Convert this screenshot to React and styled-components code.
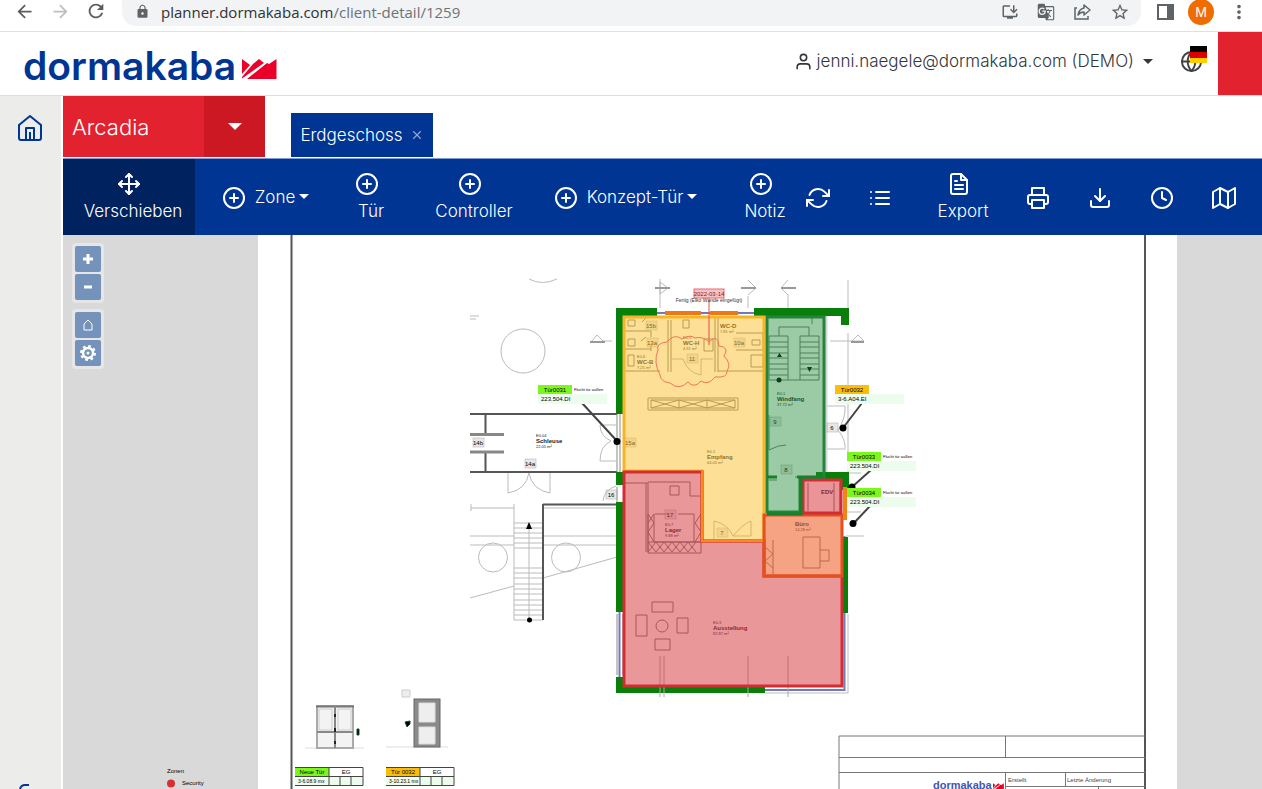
import React from 'react';
import styled, { createGlobalStyle } from 'styled-components';
import {
  FiMove, FiPlusCircle, FiRefreshCw, FiList, FiFileText, FiPrinter,
  FiDownload, FiClock, FiMap, FiUser, FiGlobe, FiX,
} from 'react-icons/fi';
import {
  MdArrowBack, MdArrowForward, MdRefresh, MdLock, MdInstallDesktop,
  MdGTranslate, MdStarBorder, MdMoreVert,
} from 'react-icons/md';

const BLUE = '#003594';
const RED = '#e3222f';

const GlobalStyle = createGlobalStyle`
  * {
    box-sizing: border-box;
  }

  body {
    margin: 0;
    background: #fff;
    font-family: Inter, "Liberation Sans", sans-serif;
  }

  a {
    color: inherit;
  }

  button {
    border: 0;
    padding: 0;
    background: none;
    color: inherit;
    font: inherit;
    cursor: pointer;
  }

  svg {
    display: block;
    flex: none;
  }
`;

const Page = styled.div`
  display: flex;
  flex-direction: column;
  height: 100vh;
  overflow: hidden;
`;

/* browser bar */

const BrowserBar = styled.div`
  display: flex;
  align-items: flex-start;
  height: 32px;
  flex: none;
  padding: 0 12px;
  border-bottom: 1px solid #dfe0e2;
  color: #5f6368;
`;

const NavButton = styled.button`
  width: 24px;
  height: 22px;
  margin-right: 12px;
  color: ${({ $dim }) => ($dim ? '#bcbec1' : '#5a5c60')};
  display: flex;
  align-items: center;
  justify-content: center;
`;

const AddressBar = styled.div`
  display: flex;
  align-items: center;
  flex: 1;
  height: 26px;
  margin-left: 2px;
  padding: 0 11px 3px 13px;
  border-radius: 0 0 14px 14px;
  background: #f1f3f4;
`;

const Address = styled.div`
  flex: 1;
  margin-left: 11px;
  font: 15px/22px "Open Sans", sans-serif;
  color: #6f7276;
  white-space: nowrap;

  strong {
    font-weight: 400;
    color: #303236;
  }
`;

const BarActions = styled.div`
  display: flex;
  align-items: center;
  gap: 18px;
  height: 24px;

  button {
    display: flex;
  }
`;

const WindowActions = styled(BarActions)`
  margin-left: 16px;
  gap: 14px;
`;

const Avatar = styled.button`
  align-items: center;
  justify-content: center;
  width: 26px;
  height: 26px;
  border-radius: 50%;
  background: #ee6c00;
  color: #fff;
  font-size: 13px;
`;

/* header */

const Header = styled.header`
  display: flex;
  align-items: stretch;
  height: 64px;
  flex: none;
  border-bottom: 1px solid #dcdddf;
`;

const Logo = styled.a`
  display: flex;
  align-items: center;
  gap: 6px;
  padding: 4px 0 0 23px;
  margin-right: auto;
  color: ${BLUE};
  font-size: 39px;
  line-height: 56px;
  font-weight: 600;
  text-decoration: none;

  svg {
    margin-top: 6px;
  }
`;

const UserMenu = styled.button`
  display: flex;
  align-items: center;
  gap: 4px;
  padding-bottom: 5px;
  color: #33363b;
  font-size: 17px;
  font-weight: 300;
`;

const Caret = styled.span`
  border: 5px solid transparent;
  border-bottom: 0;
  border-top-color: currentColor;
  margin-left: ${({ $gap }) => $gap || 0}px;
`;

const Language = styled.button`
  position: relative;
  display: flex;
  align-items: center;
  width: 28px;
  margin: 0 10px 4px 27px;
  color: #3e4146;
`;

const Flag = styled.span`
  position: absolute;
  top: 14px;
  right: 1px;
  width: 17px;
  height: 17px;
  background: linear-gradient(#000 0 6px, #d00 6px 12px, #ffce00 12px);
`;

const RedBlock = styled.div`
  width: 44px;
  background: ${RED};
`;

/* body */

const Body = styled.div`
  display: flex;
  flex: 1;
  min-height: 0;
`;

const Sidebar = styled.nav`
  display: flex;
  flex-direction: column;
  justify-content: space-between;
  align-items: center;
  width: 63px;
  flex: none;
  padding: 18px 2px 0 0;
  border-right: 2px solid #fff;
  background: #ecedeb;
  color: ${BLUE};
  overflow: hidden;
`;

const Main = styled.main`
  display: flex;
  flex-direction: column;
  flex: 1;
  min-width: 0;
`;

const Tabs = styled.div`
  display: flex;
  align-items: flex-end;
  height: 62px;
  flex: none;
  color: #fff;
`;

const Client = styled.div`
  display: flex;
  width: 202px;
  height: 61px;
  margin-bottom: 1px;
  margin-right: 26px;
  background: ${RED};
`;

const ClientName = styled.button`
  flex: 1;
  padding-left: 9px;
  text-align: left;
  font-size: 22px;
  font-weight: 300;
`;

const ClientToggle = styled.button`
  display: flex;
  align-items: center;
  justify-content: center;
  width: 61px;
  background: #cb1822;

  span {
    border-width: 7px 7px 0;
  }
`;

const Tab = styled.div`
  display: flex;
  align-items: center;
  justify-content: center;
  gap: 7px;
  width: 142px;
  height: 44px;
  margin-bottom: 1px;
  background: ${BLUE};
  font-size: 17px;
  font-weight: 300;

  button + button {
    color: #8da5d2;
  }
`;

const Toolbar = styled.div`
  display: flex;
  height: 77px;
  flex: none;
  padding-right: 7px;
  border-top: 1px solid #7d9bcd;
  background: ${BLUE};
  color: #fff;
`;

const Tool = styled.button`
  display: flex;
  align-items: center;
  justify-content: center;
  flex: none;
  gap: 9px;
  width: ${({ $width }) => $width || 62}px;
  margin-left: ${({ $push }) => ($push ? 'auto' : 0)};
  padding-top: 1px;
  background: ${({ $active }) => ($active ? '#00225f' : 'none')};
  font-size: 17px;
  line-height: 24px;
  font-weight: 300;
  white-space: nowrap;
`;

const StackedTool = styled(Tool)`
  flex-direction: column;
  gap: 3px;
  padding-top: 0;

  span {
    padding-left: 8px;
  }
`;

const MenuLabel = styled.span`
  display: flex;
  align-items: center;
  padding-bottom: 2px;
`;

/* map */

const Canvas = styled.section`
  position: relative;
  flex: 1;
  min-height: 0;
  background: #d9d9d9;
  overflow: hidden;
`;

const MapControls = styled.div`
  position: absolute;
  top: 8px;
  left: 9px;
  display: flex;
  flex-direction: column;
  gap: 6px;
`;

const ControlGroup = styled.div`
  display: flex;
  flex-direction: column;
  gap: 2px;
  padding: 3px;
  border-radius: 4px;
  background: #e6e6e8;
`;

const ControlButton = styled.button`
  display: flex;
  align-items: center;
  justify-content: center;
  width: 26px;
  height: 26px;
  border-radius: 2px;
  background: #7593ba;
  color: #fff;
`;

const PlanSvg = styled.svg`
  position: absolute;
  inset: 0;
  width: 100%;
  height: 100%;
  font-family: "Liberation Sans", sans-serif;
`;

const tools = [
  { label: 'Verschieben', icon: FiMove, width: 132, active: true },
  { label: 'Zone', icon: FiPlusCircle, width: 141, menu: true },
  { label: 'Tür', icon: FiPlusCircle },
  { label: 'Controller', icon: FiPlusCircle, width: 144 },
  { label: 'Konzept-Tür', icon: FiPlusCircle, width: 167, menu: true },
  { label: 'Notiz', icon: FiPlusCircle, width: 52, push: true },
  { title: 'Aktualisieren', icon: FiRefreshCw },
  { title: 'Liste', icon: FiList },
  { label: 'Export', icon: FiFileText, width: 96 },
  { title: 'Drucken', icon: FiPrinter },
  { title: 'Herunterladen', icon: FiDownload },
  { title: 'Verlauf', icon: FiClock },
  { title: 'Karte', icon: FiMap },
];

const ToolItem = ({ label, title, icon: Icon, width, menu, active, push }) => {
  if (!label) {
    return <Tool $width={width} aria-label={title}><Icon size={24} /></Tool>;
  }
  if (menu) {
    return (
      <Tool $width={width}>
        <Icon size={24} />
        <MenuLabel>{label}<Caret $gap={4} /></MenuLabel>
      </Tool>
    );
  }
  return (
    <StackedTool $width={width} $active={active} $push={push}>
      <Icon size={24} />
      <span>{label}</span>
    </StackedTool>
  );
};

const Crown = ({ width = 35, ...rest }) => (
  <svg viewBox="0 0 35 20" width={width} {...rest}>
    <path fill="#ea0029" d="M0 0 8 6 0 15ZM11 5 17 0 22 4 0 19.500V18ZM5 20 25 4 27 5 34.500 0V20Z" />
  </svg>
);

const HomeIcon = () => (
  <svg width="26" height="28" viewBox="0 0 26 28" fill="none" stroke="currentColor" strokeWidth="2" strokeLinejoin="round">
    <path d="M2 11 13 2 24 11V24Q24 26 22 26H4Q2 26 2 24Z" />
    <path d="M9 26V14H17V26M13 18V26" />
  </svg>
);

const ShareIcon = () => (
  <svg width="19" height="18" viewBox="0 0 19 18" fill="none" stroke="currentColor" strokeWidth="1.500">
    <path d="M4 5H2V16H15V13" />
    <path d="M11 2 17 7 11 12V9Q7 9 5 12Q6 6 11 5Z" strokeLinejoin="round" />
  </svg>
);

const doorTags = [
  { x: 538, y: 385, name: 'Tür0031', code: '223.504.DI', color: '#7df51e', note: true },
  { x: 835, y: 385, name: 'Tür0032', code: '3-6.A04.EI', color: '#f9bd0b' },
  { x: 847, y: 452, name: 'Tür0033', code: '223.504.DI', color: '#7df51e', note: true },
  { x: 847, y: 488, name: 'Tür0034', code: '223.504.DI', color: '#7df51e', note: true },
];

const DoorTag = ({ x, y, name, code, color, note }) => (
  <g>
    <rect x={x} y={y + 9} width="69" height="10" fill="#ecfced" />
    <rect x={x} y={y} width="34" height="9" fill={color} />
    <text x={x + 17} y={y + 7} fontSize="6" textAnchor="middle">{name}</text>
    <text x={x + 3} y={y + 16} fontSize="6">{code}</text>
    {note && <text x={x + 36} y={y + 6} fontSize="4">Flucht tür außen</text>}
  </g>
);

const roomLabels = [
  { x: 536, y: 443, name: 'Schleuse', nr: 'E0.04', area: '22.05 m²' },
  { x: 777, y: 401, name: 'Windfang', nr: 'E0.1', area: '37.72 m²' },
  { x: 707, y: 459, name: 'Empfang', nr: 'E0.1', area: '64.05 m²' },
  { x: 665, y: 532, name: 'Lager', nr: 'E0.7', area: '9.88 m²' },
  { x: 713, y: 630, name: 'Ausstellung', nr: 'E0.3', area: '82.87 m²' },
  { x: 795, y: 526, name: 'Büro', nr: '', area: '14.28 m²' },
  { x: 821, y: 494, name: 'EDV', nr: '', area: '' },
  { x: 637, y: 364, name: 'WC-B', nr: 'E0.6', area: '7.25 m²' },
  { x: 683, y: 345, name: 'WC-H', nr: 'E0.5', area: '4.91 m²' },
  { x: 720, y: 328, name: 'WC-D', nr: '', area: '7.81 m²' },
];

const doorNumbers = [
  ['14b', 478, 443], ['14a', 530, 464], ['16', 611, 495], ['15a', 630, 443],
  ['15b', 651, 326], ['13a', 652, 343], ['11', 692, 359], ['10a', 739, 343],
  ['9', 775, 422], ['8', 786, 470], ['17', 670, 515], ['6', 832, 428], ['7', 722, 533],
];

const stairs = [523, 528, 533, 538, 543, 548, 568, 573, 578, 584, 589, 594, 600, 605, 610, 615, 620];
const steps = [336, 342, 347, 353, 358, 364, 369, 375];

const FloorPlan = () => (
  <PlanSvg viewBox="63 235 1199 554" preserveAspectRatio="xMinYMin slice" role="img" aria-label="Grundriss Erdgeschoss">
    <rect x="258" y="235" width="919" height="560" fill="#fff" />
    <path d="M291.500 235V790" stroke="#555" strokeWidth="2" />
    <path d="M1145 235V790" stroke="#555" strokeWidth="2" />

    {/* surroundings */}
    <g fill="none" stroke="#bbb">
      <circle cx="523" cy="351" r="22" />
      <circle cx="493" cy="557.500" r="14.500" />
      <circle cx="566" cy="557.500" r="14.500" />
      <path d="M529 279Q542 286 557 279M470 316H479M470 319H476" />
      <path d="M470 536H514M543 536H617M470 545H514M543 545H617M470 598 514 586M543 578 617 557M543 508H617M471 504V511M471 508H514" />
      <path d="M514 504V620M529 528V619M848 280V310M848 333V472M848 614V693H765" />
      <path d="M508 473V493Q526 490 529 473Q532 490 550 493V473M616 425H600Q600 436 611 441Q600 446 600 461H616" />
      <path d="M603 501Q604 490 616 486M660 279V308M748 296V308M788 294V308M612 341H603M830 341H852" />
      <path d="M825 406H845Q846 418 838 430Q846 440 845 449H825M846 473H861M846 512H861M846 536H864" />
      <path d="M660 282 668 288 660 294ZM748 280 756 288 748 295M788 280 781 288 788 295M591 342 597 335 604 342ZM852 341 858 335 864 341Z" />
      {stairs.map(y => <path key={y} d={`M514 ${y}H543`} />)}
    </g>
    <path d="M655 288H670M741 288H756M781 288H796M590 342H605M851 342H864" stroke="#999" strokeWidth="2" />
    <g stroke="#555" strokeWidth="2" fill="none">
      <path d="M470 414H617M470 472H617M485.500 414V434M485.500 453V472M543 504V620M543 504.500H617" />
      <path d="M470 434.500H504M470 452H504" stroke="#888" strokeWidth="3" />
    </g>
    <path d="M529 522 526 529H532Z" />
    <circle cx="529.500" cy="620" r="2.500" />

    {/* walls */}
    <path d="M617 414V480M620 414V480M617 487V502M624 414V472M617 614V675M623 614V675" stroke="#888" fill="none" />
    <path d="M619.500 612V677M656 313H754M844.500 536V690H765" stroke="#7578b6" strokeWidth="2" fill="none" />
    <path d="M826 316V474" stroke="#d5d5df" strokeWidth="3" />
    <path d="M665 313H701M710 313H738" stroke="#ed7916" strokeWidth="4" />
    <g fill="#087f08">
      <path d="M616 308H657V316H624V414H616ZM754 308H849V325H841V316H754Z" />
      <rect x="616" y="472" width="8" height="13" />
      <rect x="616" y="502" width="8" height="110" />
      <path d="M616 677H624V686H765V693H616ZM816 472H849V490H841V479H816ZM842 537H848V613H842Z" />
    </g>

    {/* furniture and inner walls */}
    <g fill="none" stroke="#777">
      <path d="M624 331H651M624 349H651M624 371H660M651 331V337M651 345V351M671 320V372M668 320V372M715 317V372M718 317V372M718 371H763M736 333H763V350H736M751 355H763V367H751Z" />
      <path d="M628 320H635V326H628ZM628 339H635V346H628ZM628 355H634V366H628ZM683 320H689V328H683ZM704 339H713V351H704ZM642 322 646 318M641 341 646 337M752 340H760V345H752Z" />
      <path d="M648 398H738V410H648ZM651 400H735V408H651ZM651 400 679 408M651 408 679 400M679 400V408M679 400 707 408M679 408 707 400M707 400V408M707 400 735 408M707 408 735 400" />
      <path d="M624 483H648V552M646 483V552M648 482H690V496H700M648 514V553H701V514M654 514V542H701M648 542H701M694 514V542M648 514 654 523 648 532 654 542M648 523 654 514M701 514 695 523 701 532 695 542" />
      <path d="M655 514H668M678 514H694M648 542 656 552 664 542 672 552 680 542 688 552 696 542M648 552 656 542 664 552 672 542 680 552 688 542 696 552M670 486H679V495H670Z" />
      <path d="M652 602H673V612H652ZM636 615H647V636H636ZM677 618H688V633H677ZM655 639H670V650H655Z" />
      <circle cx="662" cy="626" r="6" />
      <path d="M660 656V697M664 656V697M748 656V697M788 656V697" stroke="#aaa" />
      <path d="M769 336V380H819V336M779 336V327H809V336M788 336V380M800 336V380M812 317V324" />
      {steps.map(y => <path key={y} d={`M769 ${y}H788M800 ${y}H819`} />)}
      <path d="M769 415V450Q778 445 786 445M769 480H777M795 477H823M802 483V511M808 483V511M834 483V511M840 483V511M765 540V574M773 540V574M765 547 773 554 765 561 773 568M803 537H820V568H803ZM820 550H829V561H820" />
      <path d="M714 521V539M714 521Q728 524 733 536M733 536H751V521Q743 524 733 536M683 359H671M713 359H701M701 359V375Q688 373 683 359" stroke="#aaa" />
    </g>
    <path d="M777 357H782L779.500 353ZM807 367H812L809.500 372Z" />
    <circle cx="779" cy="380" r="2.500" />

    {/* room captions */}
    {roomLabels.map(({ x, y, name, nr, area }) => (
      <g key={name} fill="#222">
        <text x={x} y={y - 6} fontSize="4">{nr}</text>
        <text x={x} y={y} fontSize="6" fontWeight="700">{name}</text>
        <text x={x} y={y + 5} fontSize="4">{area}</text>
      </g>
    ))}
    {doorNumbers.map(([nr, x, y]) => (
      <g key={nr}>
        <rect x={x - 5} y={y - 5} width="11" height="9" fill="#bbb" fillOpacity=".35" stroke="#aaa" strokeWidth=".5" />
        <text x={x} y={y + 2} fontSize="6" textAnchor="middle">{nr}</text>
      </g>
    ))}

    {/* zones */}
    <path d="M624 317H764V541H702V471H624Z" fill="#fbbf2e" fillOpacity=".5" stroke="#f4b52a" strokeWidth="3" />
    <path d="M767 317H824V478H800V512H767Z" fill="#228b36" fillOpacity=".45" stroke="#25833b" strokeWidth="3" />
    <path d="M624 472H702V541H764V576H842V686H624Z" fill="#d83b40" fillOpacity=".53" stroke="#d22d33" strokeWidth="3" />
    <path d="M764 515H842V576H764Z" fill="#f0612a" fillOpacity=".58" stroke="#e5501f" strokeWidth="3" />
    <path d="M803 480H841V513H803Z" fill="#d8323a" fillOpacity=".52" stroke="#d22d33" strokeWidth="3" />
    <path d="M702 471V541H763" fill="none" stroke="#f98b1e" strokeWidth="2" />
    <path d="M845 487V520" stroke="#f28416" strokeWidth="4" />
    <path d="M767 477H777M797 477H824M801 477V514H767" stroke="#16802b" strokeWidth="3" fill="none" />

    {/* revision cloud */}
    <path d="M709 300V345" stroke="#e54d4d" />
    <path d="M658 350Q656 343 667 342 674 333 682 339 690 334 695 338 703 336 709 342 718 333 719 346 730 347 724 356 732 364 727 371 728 378 715 377 708 386 701 381 694 389 688 382 679 391 670 383 661 382 660 375 653 362 658 350Z" fill="none" stroke="#ee7658" />
    <rect x="694" y="289" width="30" height="9" fill="#f7c2c5" stroke="#e26c72" />
    <text x="709" y="296" fontSize="6" textAnchor="middle" fill="#822">2022-03-14</text>
    <text x="709" y="302" fontSize="5" textAnchor="middle" fill="#333">Fertig (Elko Wände eingefügt)</text>

    {/* door tags */}
    <path d="M582 403 617 441M862 403 843 428M871 470 852 487M871 505 853 524" stroke="#444" strokeWidth="2" />
    <circle cx="617" cy="441.500" r="3.500" />
    <circle cx="843" cy="428" r="3.500" />
    <circle cx="852" cy="487" r="3.500" />
    <circle cx="853" cy="523.500" r="3.500" />
    {doorTags.map(tag => <DoorTag key={tag.name} {...tag} />)}

    {/* door elevations */}
    <g fill="none" stroke="#888">
      <path d="M305 748H364M386 747H448" stroke="#ddd" />
      <rect x="317" y="706" width="36" height="42" fill="#f3f3f3" stroke="#aaa" strokeWidth="2" />
      <path d="M316 706.500H354" stroke="#777" strokeWidth="2" />
      <path d="M335 706V748M317 732H353" strokeWidth="2" />
      <path d="M319 709H332V730H319ZM338 709H351V730H338Z" stroke="#ccc" />
      <path d="M335 714V717M335 728V732M335 741V744" stroke="#222" strokeWidth="2" />
      <rect x="414" y="699" width="26" height="48" fill="#8a8a8a" stroke="#666" />
      <path d="M419 703H435V722H419ZM419 727H435V744H419Z" fill="#eee" stroke="#ddd" />
      <path d="M402 690H410V697H402Z" fill="#eee" stroke="#ccc" />
    </g>
    <path d="M357 729H359V735H357ZM405 722 410 721V724L407 727Z" stroke="#164a2a" />

    {[[295, '#7df51e', 'Neue Tür', '3-6.08.9 mx'], [386, '#f9bd0b', 'Tür 0032', '3-10.23.1 mx']].map(([x, color, name, code]) => (
      <g key={name}>
        <rect x={x} y="767" width="34" height="9" fill={color} />
        <rect x={x} y="777" width="68" height="9" fill="#ecfced" />
        <path d={`M${x} 767.500H${x + 68}V785.500H${x}M${x} 776.500H${x + 68}M${x + 34} 767V786M${x + 45} 777V786M${x + 56} 777V786`} fill="none" stroke="#444" />
        <text x={x + 17} y="774" fontSize="6" textAnchor="middle">{name}</text>
        <text x={x + 51} y="774" fontSize="6" textAnchor="middle">EG</text>
        <text x={x + 3} y="783" fontSize="5">{code}</text>
      </g>
    ))}

    {/* title block */}
    <g stroke="#777" fill="none">
      <path d="M1145 736H839V790M839 757.500H1145M839 772.500H1145M1005.500 736V758M1005.500 773V790M1065.500 773V786M1005 786.500H1145M1098.500 786V790" />
    </g>
    <text x="1008" y="782" fontSize="6" fill="#444">Erstellt</text>
    <text x="1067" y="782" fontSize="6" fill="#444">Letzte Änderung</text>
    <text x="933" y="789" fontSize="11" fontWeight="700" fill="#3e56b4">dormakaba</text>
    <Crown x="993" y="783" width={11} height={7} />

    {/* legend */}
    <text x="167" y="773" fontSize="6">Zonen</text>
    <circle cx="171" cy="783.500" r="4" fill="#d8302f" />
    <text x="182" y="785" fontSize="6">Security</text>
  </PlanSvg>
);

const App = () => (
  <Page>
    <GlobalStyle />
    <BrowserBar>
      <NavButton aria-label="Zurück"><MdArrowBack size={21} /></NavButton>
      <NavButton $dim aria-label="Vorwärts"><MdArrowForward size={21} /></NavButton>
      <NavButton aria-label="Neu laden"><MdRefresh size={22} /></NavButton>
      <AddressBar>
        <MdLock size={15} />
        <Address><strong>planner.dormakaba.com</strong>/client-detail/1259</Address>
        <BarActions>
          <button aria-label="App installieren"><MdInstallDesktop size={18} /></button>
          <button aria-label="Übersetzen"><MdGTranslate size={18} /></button>
          <button aria-label="Teilen"><ShareIcon /></button>
          <button aria-label="Lesezeichen"><MdStarBorder size={20} /></button>
        </BarActions>
      </AddressBar>
      <WindowActions>
        <button aria-label="Seitenleiste">
          <svg width="17" height="16" viewBox="0 0 17 16">
            <path d="M1 1H16V15H1Z" fill="none" stroke="currentColor" strokeWidth="2" />
            <path d="M10 1H16V15H10Z" fill="currentColor" />
          </svg>
        </button>
        <Avatar>M</Avatar>
        <button aria-label="Menü"><MdMoreVert size={22} /></button>
      </WindowActions>
    </BrowserBar>

    <Header>
      <Logo href="#">dormakaba<Crown height={20} /></Logo>
      <UserMenu>
        <FiUser size={19} />
        jenni.naegele@dormakaba.com (DEMO)
        <Caret $gap={5} />
      </UserMenu>
      <Language aria-label="Sprache">
        <FiGlobe size={23} />
        <Flag />
      </Language>
      <RedBlock />
    </Header>

    <Body>
      <Sidebar>
        <a href="#" aria-label="Start"><HomeIcon /></a>
        <svg width="26" height="5" viewBox="0 0 26 5">
          <path d="M3 5Q4 1 8 1H12" fill="none" stroke="currentColor" strokeWidth="2" />
        </svg>
      </Sidebar>
      <Main>
        <Tabs>
          <Client>
            <ClientName>Arcadia</ClientName>
            <ClientToggle aria-label="Objekt wählen"><Caret /></ClientToggle>
          </Client>
          <Tab>
            <button>Erdgeschoss</button>
            <button aria-label="Schließen"><FiX size={14} /></button>
          </Tab>
        </Tabs>
        <Toolbar>
          {tools.map(tool => <ToolItem key={tool.label || tool.title} {...tool} />)}
        </Toolbar>
        <Canvas>
          <FloorPlan />
          <MapControls>
            <ControlGroup>
              <ControlButton aria-label="Vergrößern">
                <svg width="12" height="12" viewBox="0 0 12 12"><path d="M6 1V11M1 6H11" stroke="currentColor" strokeWidth="3" /></svg>
              </ControlButton>
              <ControlButton aria-label="Verkleinern">
                <svg width="12" height="12" viewBox="0 0 12 12"><path d="M2 6H10" stroke="currentColor" strokeWidth="3" /></svg>
              </ControlButton>
            </ControlGroup>
            <ControlGroup>
              <ControlButton aria-label="Ansicht zurücksetzen">
                <svg width="12" height="14" viewBox="0 0 12 14"><path d="M2 12V6L6 2 10 6V12Z" fill="none" stroke="currentColor" /></svg>
              </ControlButton>
              <ControlButton aria-label="Einstellungen">
                <svg width="18" height="18" viewBox="0 0 18 18" fill="none" stroke="currentColor">
                  <circle cx="9" cy="9" r="5" strokeWidth="2.500" />
                  <circle cx="9" cy="9" r="7" strokeWidth="2" strokeDasharray="2.750 2.750" />
                  <circle cx="9" cy="9" r="1.500" fill="currentColor" stroke="none" />
                </svg>
              </ControlButton>
            </ControlGroup>
          </MapControls>
        </Canvas>
      </Main>
    </Body>
  </Page>
);

export default App;
